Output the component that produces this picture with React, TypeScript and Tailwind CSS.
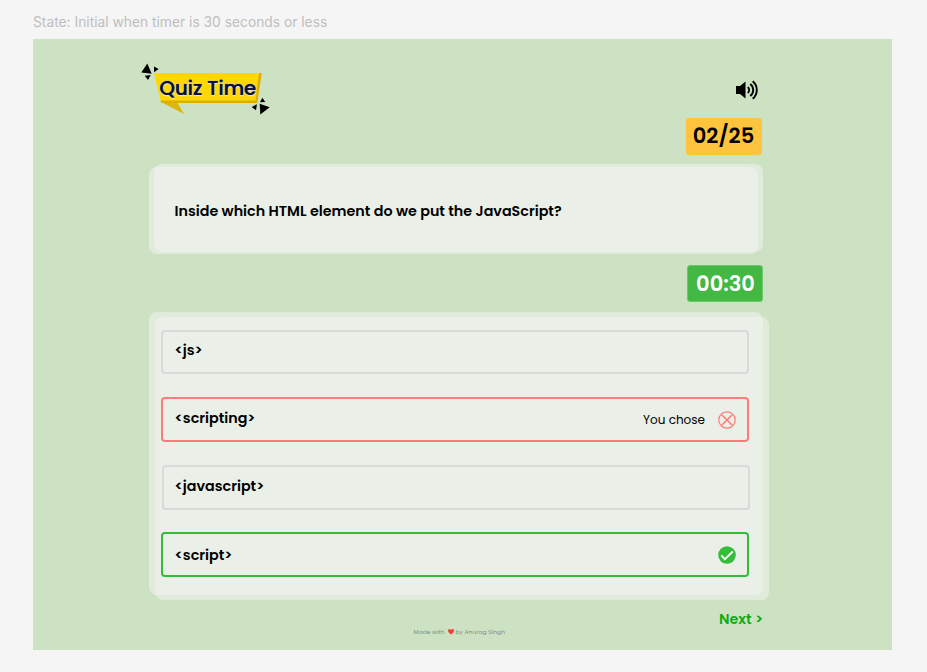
import React from "react";

const poppins = "font-['Poppins','Inter',sans-serif]";

function Logo() {
  return (
    <div className="relative h-[56px] w-[134px]">
      <svg viewBox="0 0 134 56" className="absolute inset-0 h-full w-full" aria-hidden="true">
        <polygon points="22,41 38,41 45,53" fill="#dcb60a" />
        <polygon points="119.500,12 122.700,12 118.300,42 22,42 21.700,39 115,39" fill="#dcae00" />
        <polygon points="15,12 120,12 116.500,39.500 21.700,39.500" fill="#ffd700" />
        <g fill="#000">
          <polygon points="8.300,2.500 2.300,11.500 12.700,12.700" />
          <polygon points="15,5.500 19.700,8 15,11.300" />
          <polygon points="5.700,14.700 11.700,13.900 9,19" />
          <polygon points="120.700,42.700 130.700,46.300 121.300,53.500" />
          <polygon points="123.300,36.700 126.300,40.900 121,41.300" />
          <polygon points="112.700,46 118,43.300 117,49.300" />
        </g>
      </svg>
      <span className={`absolute left-[20.500px] top-[14px] whitespace-nowrap text-[19.700px] font-medium leading-[26px] text-[#08103c] [text-shadow:0_0_1px_#08103c,0_0_2px_#fff,0_1px_1px_#fff] ${poppins}`}>
        Quiz Time
      </span>
    </div>
  );
}

function Speaker() {
  return (
    <svg viewBox="0 0 24 20" className="h-[20px] w-[24px]" aria-label="Sound on">
      <path d="M1 6h4l5.500-4.500v17L5 14H1z" fill="#000" />
      <path d="M12.800 7a4 4 0 0 1 0 6M15.200 4a7.500 7.500 0 0 1 0 12M17.700 1.200a11.500 11.500 0 0 1 0 17.600" fill="none" stroke="#000" strokeWidth="1.900" />
    </svg>
  );
}

function CrossIcon() {
  return (
    <svg viewBox="0 0 18 18" className="h-[18px] w-[18px]" fill="none" stroke="#ff7b7b">
      <circle cx="9" cy="9" r="8.200" strokeWidth="1.200" />
      <path d="M4 4l10 10M14 4L4 14" strokeWidth="1.600" />
    </svg>
  );
}

function CheckIcon() {
  return (
    <svg viewBox="0 0 18 18" className="h-[18px] w-[18px]">
      <circle cx="9" cy="9" r="8.800" fill="#35bd3a" />
      <path d="M3.300 9.300L6.900 13.200L14.800 5.500" fill="none" stroke="#fff" strokeWidth="1.800" />
    </svg>
  );
}

interface OptionProps {
  label: string;
  box: string;
  text: string;
  children?: React.ReactNode;
}

function Option({ label, box, text, children }: OptionProps) {
  return (
    <div className={`flex w-[588px] justify-between rounded-[4px] border-2 pr-[11px] ${box}`}>
      <span className={`text-[14.300px] font-semibold leading-[20px] ${text}`}>{label}</span>
      {children}
    </div>
  );
}

export default function App() {
  return (
    <div className={`h-[672px] w-[927px] overflow-hidden bg-[#f5f5f5] pl-[33px] text-black ${poppins}`}>
      <div className="h-[39px] pt-[13px] font-['Inter',sans-serif] text-[13.800px] leading-[18px] text-[#bebebe]">
        State: Initial when timer is 30 seconds or less
      </div>
      <main className="flex h-[611px] w-[859px] flex-col bg-[#cde2c3] pl-[116px]">
        <div className="flex h-[125px] w-[614px] justify-between">
          <div className="-ml-[10px] pt-[22px]">
            <Logo />
          </div>
          <div className="flex flex-col items-end pt-[41px]">
            <div className="pr-[4px]"><Speaker /></div>
            <div className="mr-px mt-[18px] flex h-[37px] w-[76px] shrink-0 items-center justify-center rounded-[3px] bg-[#ffc43d] pb-[2px] pr-px text-[21px] font-semibold leading-none">
              02/25
            </div>
          </div>
        </div>

        <section className="grid h-[90px] w-[614px] shrink-0">
          <div className="col-start-1 row-start-1 mr-[5.500px] mt-[2.500px] rounded-[8px] bg-[#f4f4f4]/50" />
          <div className="col-start-1 row-start-1 mb-[2.500px] ml-[5px] rounded-[8px] bg-[#f4f4f4]/50" />
          <h1 className="z-10 col-start-1 row-start-1 pl-[25.500px] pt-[37px] text-[14.300px] font-semibold leading-[20px]">
            Inside which HTML element do we put the JavaScript?
          </h1>
        </section>

        <div className="flex h-[58px] w-[614px] shrink-0 justify-end pt-[11px]">
          <div className="flex h-[37px] w-[76px] items-center justify-center rounded-[3px] border border-[#6cc76a] bg-[#43b943] pl-px text-[21px] font-semibold leading-none text-white">
            00:30
          </div>
        </div>

        <section className="grid h-[288px] w-[620px] shrink-0">
          <div className="col-start-1 row-start-1 mb-[5px] mr-[6px] rounded-[8px] bg-[#f4f4f4]/50" />
          <div className="col-start-1 row-start-1 ml-[6px] mt-[5px] rounded-[8px] bg-[#f4f4f4]/50" />
          <div className="z-10 col-start-1 row-start-1 flex flex-col gap-[23px] pl-[12px] pt-[18px]">
            <Option label="<js>" box="h-[44px] border-[#d9d9d9] pl-[11.500px]" text="pt-[8px]" />
            <Option label="<scripting>" box="h-[45px] border-[#ff7b7b] pl-[11.500px]" text="pt-[9px]">
              <span className="flex items-center gap-[13px] text-[12px]">
                <span className="pt-px">You chose</span>
                <CrossIcon />
              </span>
            </Option>
            <Option label="<javascript>" box="ml-px h-[45px] border-[#d9d9d9] pl-[10.500px]" text="pt-[9px]" />
            <Option label="<script>" box="-mt-px h-[45px] border-[#35bd3a] pl-[11.500px]" text="pt-[11px]">
              <span className="flex items-center"><CheckIcon /></span>
            </Option>
          </div>
        </section>

        <div className="w-[614px] pt-[9px] text-right text-[14.300px] font-semibold leading-[20px] text-[#0cab13]">
          Next &gt;
        </div>
        <footer className="-mt-px ml-[264.500px] flex items-center text-[6px] leading-[8px] text-[#858c82]">
          Made with
          <svg viewBox="0 0 12 11" className="ml-[3px] mr-[2px] h-[5.500px] w-[6px]">
            <path d="M6 11C4 9 0 7 0 3.500C0 0 4-1 6 2C8-1 12 0 12 3.500C12 7 8 9 6 11Z" fill="#f44336" />
          </svg>
          by Anurag Singh
        </footer>
      </main>
    </div>
  );
}
